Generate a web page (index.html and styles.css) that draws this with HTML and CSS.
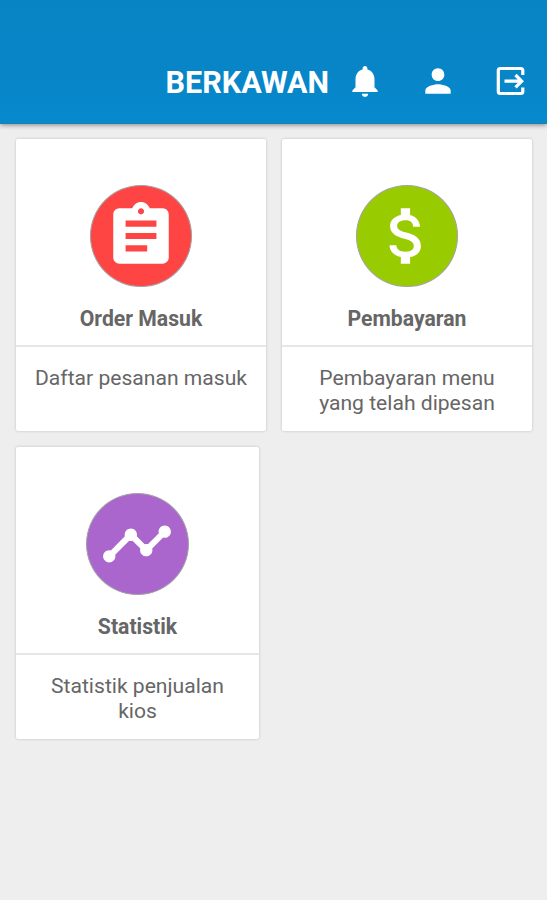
FILE: index.html
```html
<!DOCTYPE html>
<html lang="id">

<head>
  <meta charset="utf-8">
  <title>Berkawan</title>
  <meta name="viewport" content="width=device-width, initial-scale=1">
  <link rel="stylesheet" href="styles.css">
</head>

<body>
  <header class="toolbar">
    <h1 class="toolbar-title">BERKAWAN</h1>
    <button class="toolbar-btn" aria-label="Notifikasi">
      <svg viewBox="0 0 24 24"><path d="M12 22c1.1 0 2-.9 2-2h-4c0 1.1.89 2 2 2zm6-6v-5c0-3.07-1.64-5.64-4.5-6.32V4c0-.83-.67-1.5-1.5-1.5s-1.5.67-1.5 1.5v.68C7.63 5.36 6 7.92 6 11v5l-2 2v1h16v-1l-2-2z"/></svg>
    </button>
    <button class="toolbar-btn" aria-label="Profil">
      <svg viewBox="0 0 24 24"><path d="M12 12c2.21 0 4-1.79 4-4s-1.79-4-4-4-4 1.79-4 4 1.79 4 4 4zm0 2c-2.67 0-8 1.34-8 4v2h16v-2c0-2.66-5.33-4-8-4z"/></svg>
    </button>
    <button class="toolbar-btn" aria-label="Keluar">
      <svg class="exit-icon" viewBox="0 0 38 38">
        <path d="M30.8 13V8.500a2 2 0 0 0-2-2h-20.500a2 2 0 0 0-2 2v21a2 2 0 0 0 2 2h20.500a2 2 0 0 0 2-2V25.500"/>
        <path d="M12.500 19.200h17M23.500 13l6.200 6.200-6.200 6.200"/>
      </svg>
    </button>
  </header>

  <main class="menu">
    <div class="menu-row">
      <a class="card">
        <div class="card-head">
          <div class="card-icon red">
            <svg viewBox="0 0 24 24"><path d="M19 3h-4.180C14.400 1.840 13.300 1 12 1c-1.300 0-2.400.84-2.820 2H5c-1.100 0-2 .9-2 2v14c0 1.100.9 2 2 2h14c1.100 0 2-.9 2-2V5c0-1.100-.9-2-2-2zm-7 0c.55 0 1 .45 1 1s-.45 1-1 1-1-.45-1-1 .45-1 1-1zm2 14H7v-2h7v2zm3-4H7v-2h10v2zm0-4H7V7h10v2z"/></svg>
          </div>
          <h2 class="card-title">Order Masuk</h2>
        </div>
        <p class="card-text">Daftar pesanan masuk</p>
      </a>
      <a class="card">
        <div class="card-head">
          <div class="card-icon green">
            <svg viewBox="0 0 24 24"><path d="M11.8 10.9c-2.27-.59-3-1.2-3-2.15 0-1.09 1.01-1.85 2.7-1.85 1.78 0 2.44.85 2.5 2.1h2.21c-.07-1.72-1.12-3.3-3.21-3.81V3h-3v2.16c-1.94.42-3.5 1.68-3.5 3.61 0 2.31 1.91 3.46 4.7 4.13 2.5.6 3 1.48 3 2.41 0 .69-.49 1.79-2.7 1.79-2.06 0-2.87-.92-2.98-2.1h-2.2c.12 2.19 1.76 3.42 3.68 3.83V21h3v-2.15c1.95-.37 3.5-1.5 3.5-3.55 0-2.84-2.43-3.81-4.7-4.4z"/></svg>
          </div>
          <h2 class="card-title">Pembayaran</h2>
        </div>
        <p class="card-text">Pembayaran menu yang telah dipesan</p>
      </a>
    </div>
    <div class="menu-row">
      <a class="card card-single">
        <div class="card-head">
          <div class="card-icon purple">
            <svg viewBox="0 0 24 24"><path d="M23 8c0 1.1-.9 2-2 2-.18 0-.35-.02-.51-.07l-3.56 3.55c.05.16.07.34.07.52 0 1.1-.9 2-2 2s-2-.9-2-2c0-.18.02-.36.07-.52l-2.55-2.55c-.16.05-.34.07-.52.07s-.36-.02-.52-.07l-4.55 4.56c.05.16.07.33.07.51 0 1.1-.9 2-2 2s-2-.9-2-2 .9-2 2-2c.18 0 .35.02.51.07l4.56-4.55C8.02 9.36 8 9.18 8 9c0-1.1.9-2 2-2s2 .9 2 2c0 .18-.02.36-.07.52l2.55 2.55c.16-.05.34-.07.52-.07s.36.02.52.07l3.55-3.56C19.02 8.35 19 8.18 19 8c0-1.1.9-2 2-2s2 .9 2 2z"/></svg>
          </div>
          <h2 class="card-title">Statistik</h2>
        </div>
        <p class="card-text">Statistik penjualan kios</p>
      </a>
    </div>
  </main>
</body>

</html>
```
FILE: styles.css
```css
* {
  box-sizing: border-box;
}

body {
  font-family: Roboto, sans-serif;
  margin: 0;
  min-height: 100vh;
  background-color: #eeeeee;
  color: #666666;
}

.toolbar {
  display: flex;
  justify-content: flex-end;
  align-items: flex-end;
  height: 124px;
  padding: 0 17px 23px 0;
  background: linear-gradient(#0684c3, #0785c7 55%, #0789ce);
  border-bottom: 1px solid #1b7fb5;
  box-shadow: 0 1px 5px rgba(0, 0, 0, 0.45);
}

.toolbar-title {
  margin: 0 17px 0 0;
  font-size: 30.5px;
  line-height: 34px;
  font-weight: 700;
  color: #ffffff;
}

.toolbar-btn {
  width: 38px;
  height: 38px;
  margin: 0 0 0 35px;
  padding: 0;
  border: 0;
  background: none;
  cursor: pointer;
}

.toolbar-title + .toolbar-btn {
  margin-left: 0;
}

.toolbar-btn svg {
  display: block;
  width: 38px;
  height: 38px;
  fill: #ffffff;
}

.toolbar-btn .exit-icon {
  fill: none;
  stroke: #ffffff;
  stroke-width: 3.2;
}

.menu {
  display: flex;
  flex-direction: column;
  gap: 16px;
  padding: 15px 15px 0 16px;
}

.menu-row {
  display: flex;
  gap: 16px;
}

.card {
  flex: 1;
  height: 292px;
  background-color: #ffffff;
  border-radius: 2px;
  box-shadow: 0 0 3px rgba(0, 0, 0, 0.2);
  text-align: center;
}

.card-single {
  flex: none;
  width: 243px;
}

.card-head {
  display: flex;
  flex-direction: column;
  align-items: center;
  height: 208px;
  padding-top: 46px;
  border-bottom: 2px solid #e6e6e6;
}

.card-icon {
  display: flex;
  align-items: center;
  justify-content: center;
  width: 102.5px;
  height: 102px;
  border: 1px solid #a3a3a3;
  border-radius: 50%;
}

.card-icon svg {
  width: 74px;
  height: 74px;
  margin: 0 1px 1px 0;
  fill: #ffffff;
}

.red {
  background-color: #ff4444;
}

.green {
  background-color: #99cc00;
}

.purple {
  background-color: #aa66cc;
}

.card-title {
  margin: 19px 0 0;
  font-size: 21.2px;
  line-height: 25px;
  font-weight: 700;
}

.card-text {
  margin: 0;
  padding: 18px 16px 0;
  font-size: 21.1px;
  line-height: 25px;
}
```
